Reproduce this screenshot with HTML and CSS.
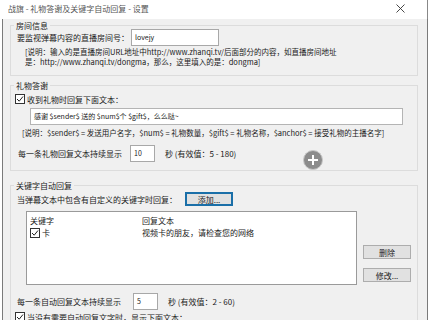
FILE: index.html
```html
<!DOCTYPE html>
<html lang="zh-CN">
<head>
  <meta charset="UTF-8" />
  <title>战旗 - 礼物答谢及关键字自动回复 - 设置</title>
  <link rel="stylesheet" href="styles.css">
</head>
<body>
  <div class="window">
    <div class="titlebar">
      <span class="title">战旗 - 礼物答谢及关键字自动回复 - 设置</span>
      <svg class="close" width="9" height="9" viewBox="0 0 9 9">
        <path d="M0.5 0.5 L8.5 8.5 M8.5 0.5 L0.5 8.5" stroke="#333" stroke-width="0.9" fill="none"/>
      </svg>
    </div>

    <div class="content">
      <div class="group room">
        <div class="group-title">房间信息</div>
        <div class="row room-row">
          <span class="room-label">要监视弹幕内容的直播房间号：</span>
          <div class="field room-id">lovejy</div>
        </div>
        <p class="note room-note">[说明：输入的是直播房间URL地址中http://www.zhanqi.tv/后面部分的内容，如直播房间地址<br>是：http://www.zhanqi.tv/dongma，那么，这里填入的是：dongma]</p>
      </div>

      <div class="group gift">
        <div class="group-title">礼物答谢</div>
        <label class="check-row gift-check">
          <span class="checkbox"><svg width="8" height="8" viewBox="0 0 8 8"><path d="M1 4 L3.2 6.2 L7 1.5" stroke="#222" stroke-width="1" fill="none"/></svg></span>
          收到礼物时回复下面文本：
        </label>
        <div class="field gift-text">感谢 $sender$ 送的 $num$个 $gift$，么么哒~</div>
        <p class="note gift-note">[说明：$sender$ = 发送用户名字，$num$ = 礼物数量，$gift$ = 礼物名称，$anchor$ = 接受礼物的主播名字]</p>
        <div class="row duration">
          <span class="duration-label">每一条礼物回复文本持续显示</span>
          <div class="field small">10</div>
          <span class="hint">秒 (有效值：5 - 180)</span>
        </div>
      </div>

      <div class="group keyword">
        <div class="group-title">关键字自动回复</div>
        <div class="row add-row">
          <span class="add-label">当弹幕文本中包含有自定义的关键字时回复：</span>
          <button class="btn focused">添加...</button>
        </div>
        <div class="list-row">
          <div class="list">
            <div class="list-line head">
              <span class="col-key">关键字</span>
              <span class="col-text">回复文本</span>
            </div>
            <div class="list-line">
              <span class="col-key">
                <span class="checkbox"><svg width="8" height="8" viewBox="0 0 8 8"><path d="M1 4 L3.2 6.2 L7 1.5" stroke="#222" stroke-width="1" fill="none"/></svg></span>
                卡
              </span>
              <span class="col-text">视频卡的朋友，请检查您的网络</span>
            </div>
          </div>
          <div class="list-buttons">
            <button class="btn">删除</button>
            <button class="btn">修改...</button>
          </div>
        </div>
        <div class="row duration kw-duration">
          <span class="duration-label kw-label">每一条自动回复文本持续显示</span>
          <div class="field small">5</div>
          <span class="hint">秒 (有效值：2 - 60)</span>
        </div>
        <label class="check-row idle-check">
          <span class="checkbox"><svg width="8" height="8" viewBox="0 0 8 8"><path d="M1 4 L3.2 6.2 L7 1.5" stroke="#222" stroke-width="1" fill="none"/></svg></span>
          当没有需要自动回复文字时，显示下面文本：
        </label>
      </div>
    </div>

    <div class="fab">
      <svg width="20" height="20" viewBox="0 0 20 20">
        <circle cx="10" cy="10" r="9.5" fill="#8c8c8c" stroke="#c8c8c8" stroke-width="1"/>
        <path d="M10 5 V15 M5 10 H15" stroke="#fff" stroke-width="2"/>
      </svg>
    </div>
  </div>
</body>
</html>
```

FILE: styles.css
```css
* {
  box-sizing: border-box;
}

body {
  margin: 0;
  background: #fff;
  font-family: "Noto Sans CJK SC", "Noto Sans", sans-serif;
  font-size: 8px;
  color: #1a1a1a;
}

.window {
  position: relative;
  width: 426px;
  height: 320px;
  margin-left: 2px;
  overflow: hidden;
}

.titlebar {
  height: 19px;
  display: flex;
  align-items: center;
  justify-content: space-between;
  padding: 0 22px 2px 6px;
  background: #fff;
  border-right: 1px solid #888;
}

.title {
  color: #555;
  font-size: 8px;
}

.content {
  height: 301px;
  background: #f0f0f0;
  border-left: 1px solid #7a7a7a;
  border-right: 1px solid #7a7a7a;
  padding: 6px 9px 0 7px;
}

.group {
  border: 1px solid #dcdcdc;
}

.group-title {
  width: fit-content;
  height: 10px;
  line-height: 10px;
  margin: -5px 0 -5px 3px;
  padding: 0 2px;
  background: #f0f0f0;
}

.row {
  display: flex;
  align-items: center;
}

.field {
  height: 17px;
  line-height: 15px;
  padding: 0 3px;
  background: #fff;
  border: 1px solid #a8a8a8;
  font-size: 7px;
}

.note {
  margin: 0;
  line-height: 10px;
  white-space: nowrap;
}

/* 房间信息 */
.room-row {
  margin-top: 3px;
  padding-left: 6px;
}

.room-label {
  width: 114px;
}

.room-id {
  width: 88px;
}

.room-note {
  margin-top: 1px;
  padding-left: 14px;
  padding-bottom: 8px;
  font-size: 7.5px;
}

/* 礼物答谢 */
.gift {
  margin-top: 9px;
}

.check-row {
  display: flex;
  align-items: center;
  height: 12px;
  padding-left: 4px;
}

.checkbox {
  display: inline-flex;
  align-items: center;
  justify-content: center;
  width: 10px;
  height: 10px;
  margin-right: 2px;
  background: #fff;
  border: 1px solid #333;
}

.gift-check {
  margin-top: 7px;
}

.gift-text {
  width: 373px;
  margin: 3px 0 0 19px;
  border-color: #b4b4b4;
}

.gift-note {
  margin-top: 3px;
  padding-left: 11px;
  font-size: 7.5px;
}

.duration {
  margin-top: 7px;
  padding-left: 7px;
  padding-bottom: 8px;
}

.duration-label {
  width: 112px;
}

.small {
  width: 25px;
}

.hint {
  margin-left: 10px;
}

/* 关键字自动回复 */
.keyword {
  margin-top: 14px;
  height: 140px;
}

.add-row {
  margin-top: 6px;
  padding-left: 6px;
}

.add-label {
  width: 168px;
}

.btn {
  width: 48px;
  height: 14px;
  padding: 0;
  font-family: inherit;
  font-size: 8px;
  color: #1a1a1a;
  background: #e1e1e1;
  border: 1px solid #adadad;
}

.btn.focused {
  border-color: #1a6fa8;
  box-shadow: inset 0 0 0 1px #1a6fa8;
}

.list-row {
  display: flex;
  margin-top: 5px;
  padding-left: 15px;
}

.list {
  width: 331px;
  height: 74px;
  background: #fff;
  border: 1px solid #9a9a9a;
  padding: 2px 0 0 3px;
}

.list-line {
  display: flex;
  align-items: center;
  height: 13px;
}

.list-line.head {
  height: 12px;
}

.col-key {
  display: flex;
  align-items: center;
  width: 112px;
}

.list-buttons {
  display: flex;
  flex-direction: column;
  gap: 9px;
  padding: 34px 0 0 6px;
}

.kw-duration {
  margin-top: 8px;
  padding-left: 6px;
  padding-bottom: 0;
}

.kw-label {
  width: 116px;
}

.idle-check {
  margin-top: 1px;
}

.fab {
  position: absolute;
  left: 301px;
  top: 150px;
  width: 20px;
  height: 20px;
}
```
